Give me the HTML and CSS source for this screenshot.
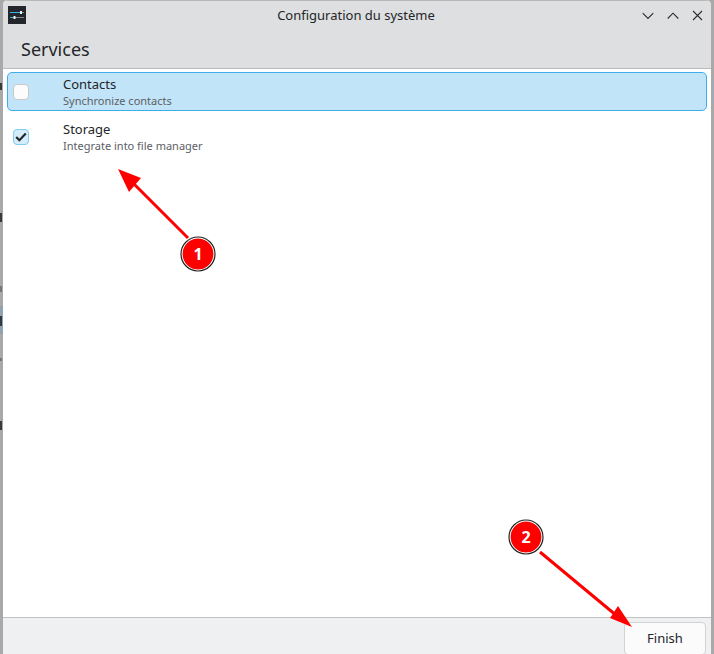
FILE: index.html
```html
<!DOCTYPE html>
<html lang="fr">
<head>
<meta charset="utf-8">
<title>Configuration du système</title>
<link rel="stylesheet" href="styles.css">
</head>
<body>
<div class="desktop">
  <div class="strip-marks">
    <i class="mark m1"></i><i class="mark m2"></i><i class="mark m3"></i><i class="mark m4"></i><i class="mark m5"></i><i class="mark m6"></i><i class="mark m7"></i>
  </div>
  <div class="window">
    <header class="titlebar">
      <svg class="app-icon" width="18" height="18" viewBox="0 0 18 18">
        <rect width="18" height="18" fill="#23262b"/>
        <path d="M2 6.5h11" stroke="#3daee9" stroke-width="1.2"/>
        <path d="M13 6.5h3" stroke="#7f8c8d" stroke-width="1"/>
        <rect x="12" y="5" width="2" height="3" fill="#eff0f1"/>
        <path d="M2 11.5h5" stroke="#3daee9" stroke-width="1.2"/>
        <path d="M7 11.5h9" stroke="#7f8c8d" stroke-width="1"/>
        <rect x="5.5" y="10" width="2" height="3" fill="#eff0f1"/>
      </svg>
      <div class="title">Configuration du système</div>
      <div class="controls">
        <svg width="12" height="8" viewBox="0 0 12 8"><path d="M.7 1.2 6 6.5l5.3-5.3" class="glyph"/></svg>
        <svg width="12" height="8" viewBox="0 0 12 8"><path d="M.7 6.5 6 1.2l5.3 5.3" class="glyph"/></svg>
        <svg width="11" height="11" viewBox="0 0 11 11"><path d="m1 1 9 9M10 1l-9 9" class="glyph"/></svg>
      </div>
    </header>
    <div class="page-head">Services</div>
    <main class="content">
      <div class="row selected">
        <span class="check"></span>
        <div class="labels">
          <div class="name">Contacts</div>
          <div class="desc">Synchronize contacts</div>
        </div>
      </div>
      <div class="row">
        <span class="check checked">
          <svg width="12" height="10" viewBox="0 0 12 10"><path d="M1.2 5 4.4 8.2 10.8 1.6" fill="none" stroke="#232629" stroke-width="2.2"/></svg>
        </span>
        <div class="labels">
          <div class="name">Storage</div>
          <div class="desc">Integrate into file manager</div>
        </div>
      </div>
    </main>
    <footer class="footer">
      <button class="finish" type="button">Finish</button>
    </footer>
  </div>
  <svg class="annot" width="714" height="654" viewBox="0 0 714 654">
    <path d="M188 238 131 181" stroke="#f00" stroke-width="3"/>
    <path d="M118 169 141 178 129 192Z" fill="#f00"/>
    <path d="M540 552 617 616" stroke="#f00" stroke-width="3"/>
    <path d="M632 627 610 618 618 606Z" fill="#f00"/>
    <circle cx="198" cy="254" r="16" fill="#f00" stroke="#fff" stroke-width="1.2"/>
    <circle cx="198" cy="254" r="17" fill="none" stroke="#222" stroke-width="1.2"/>
    <circle cx="526" cy="537" r="16" fill="#f00" stroke="#fff" stroke-width="1.2"/>
    <circle cx="526" cy="537" r="17" fill="none" stroke="#222" stroke-width="1.2"/>
    <text x="198" y="260" class="num">1</text>
    <text x="526" y="543" class="num">2</text>
  </svg>
</div>
</body>
</html>
```
FILE: styles.css
```css
html, body {
  margin: 0;
  height: 100%;
  overflow: hidden;
}
body {
  background: #fff;
  font-family: "Noto Sans", sans-serif;
  color: #232629;
}
.desktop {
  position: relative;
  width: 714px;
  height: 654px;
  display: flex;
  background: #a9a9a9;
}
.strip-marks {
  width: 3px;
  flex: none;
  position: relative;
}
.mark {
  position: absolute;
  left: 0;
  width: 2px;
  background: #3a3a3a;
}
.m1 { top: 83px; height: 7px; }
.m2 { top: 213px; height: 9px; }
.m3 { top: 286px; height: 6px; background: #777; }
.m4 { top: 306px; height: 28px; width: 3px; background: #8fa3b2; }
.m5 { top: 316px; height: 10px; background: #2e3a42; }
.m6 { top: 358px; height: 3px; background: #777; }
.m7 { top: 421px; height: 9px; }
.window {
  width: 708px;
  flex: none;
  height: 654px;
  display: flex;
  flex-direction: column;
  background: #fff;
  border-radius: 5px 5px 0 0;
  overflow: hidden;
}
.titlebar {
  height: 32px;
  flex: none;
  display: grid;
  grid-template-columns: 1fr auto 1fr;
  align-items: center;
  padding: 0 8px 0 5px;
  background: #dedfe0;
  border-top: 1px solid #b8b8b8;
  box-sizing: border-box;
}
.app-icon {
  margin-top: -3px;
}
.title {
  font-size: 13px;
  line-height: 16px;
  margin: -4px 0 0 1px;
}
.controls {
  display: flex;
  align-items: center;
  justify-content: flex-end;
  gap: 13px;
  margin-top: -2px;
}
.glyph {
  fill: none;
  stroke: #2b2e31;
  stroke-width: 1.1;
}
.page-head {
  height: 37px;
  flex: none;
  box-sizing: border-box;
  background: #dedfe0;
  border-bottom: 1px solid #b9bbbd;
  padding: 4px 0 0 18px;
  font-size: 18px;
  line-height: 26px;
}
.content {
  flex: 1;
  padding: 3px 4px 0;
}
.row {
  height: 37px;
  display: flex;
  align-items: center;
  padding-left: 5px;
  border: 1px solid transparent;
  border-radius: 5px;
}
.row + .row {
  margin-top: 6px;
}
.row.selected {
  background: #c2e4f8;
  border-color: #3daee9;
}
.check {
  width: 14px;
  height: 14px;
  flex: none;
  border: 1px solid #c6c8ca;
  border-radius: 4px;
  background: #fcfcfc;
  display: flex;
  align-items: center;
  justify-content: center;
}
.check.checked {
  background: #d5ecfa;
  border-color: #7fcbf1;
}
.labels {
  margin-left: 34px;
}
.name {
  font-size: 13px;
  line-height: 18px;
}
.desc {
  font-size: 11px;
  line-height: 15px;
  color: #5b6064;
}
.footer {
  height: 37px;
  flex: none;
  box-sizing: border-box;
  background: #eff0f1;
  border-top: 1px solid #c0c2c4;
  display: flex;
  justify-content: flex-end;
  padding: 4px 5px 0 0;
}
.finish {
  width: 82px;
  height: 33px;
  font: 13px "Noto Sans", sans-serif;
  color: #232629;
  background: #fbfbfb;
  border: 1px solid #d0d2d4;
  border-radius: 4px;
  padding: 0 0 2px;
}
.annot {
  position: absolute;
  left: 0;
  top: 0;
}
.num {
  font: bold 16px "Open Sans", "Noto Sans", sans-serif;
  fill: #fff;
  text-anchor: middle;
}
```
